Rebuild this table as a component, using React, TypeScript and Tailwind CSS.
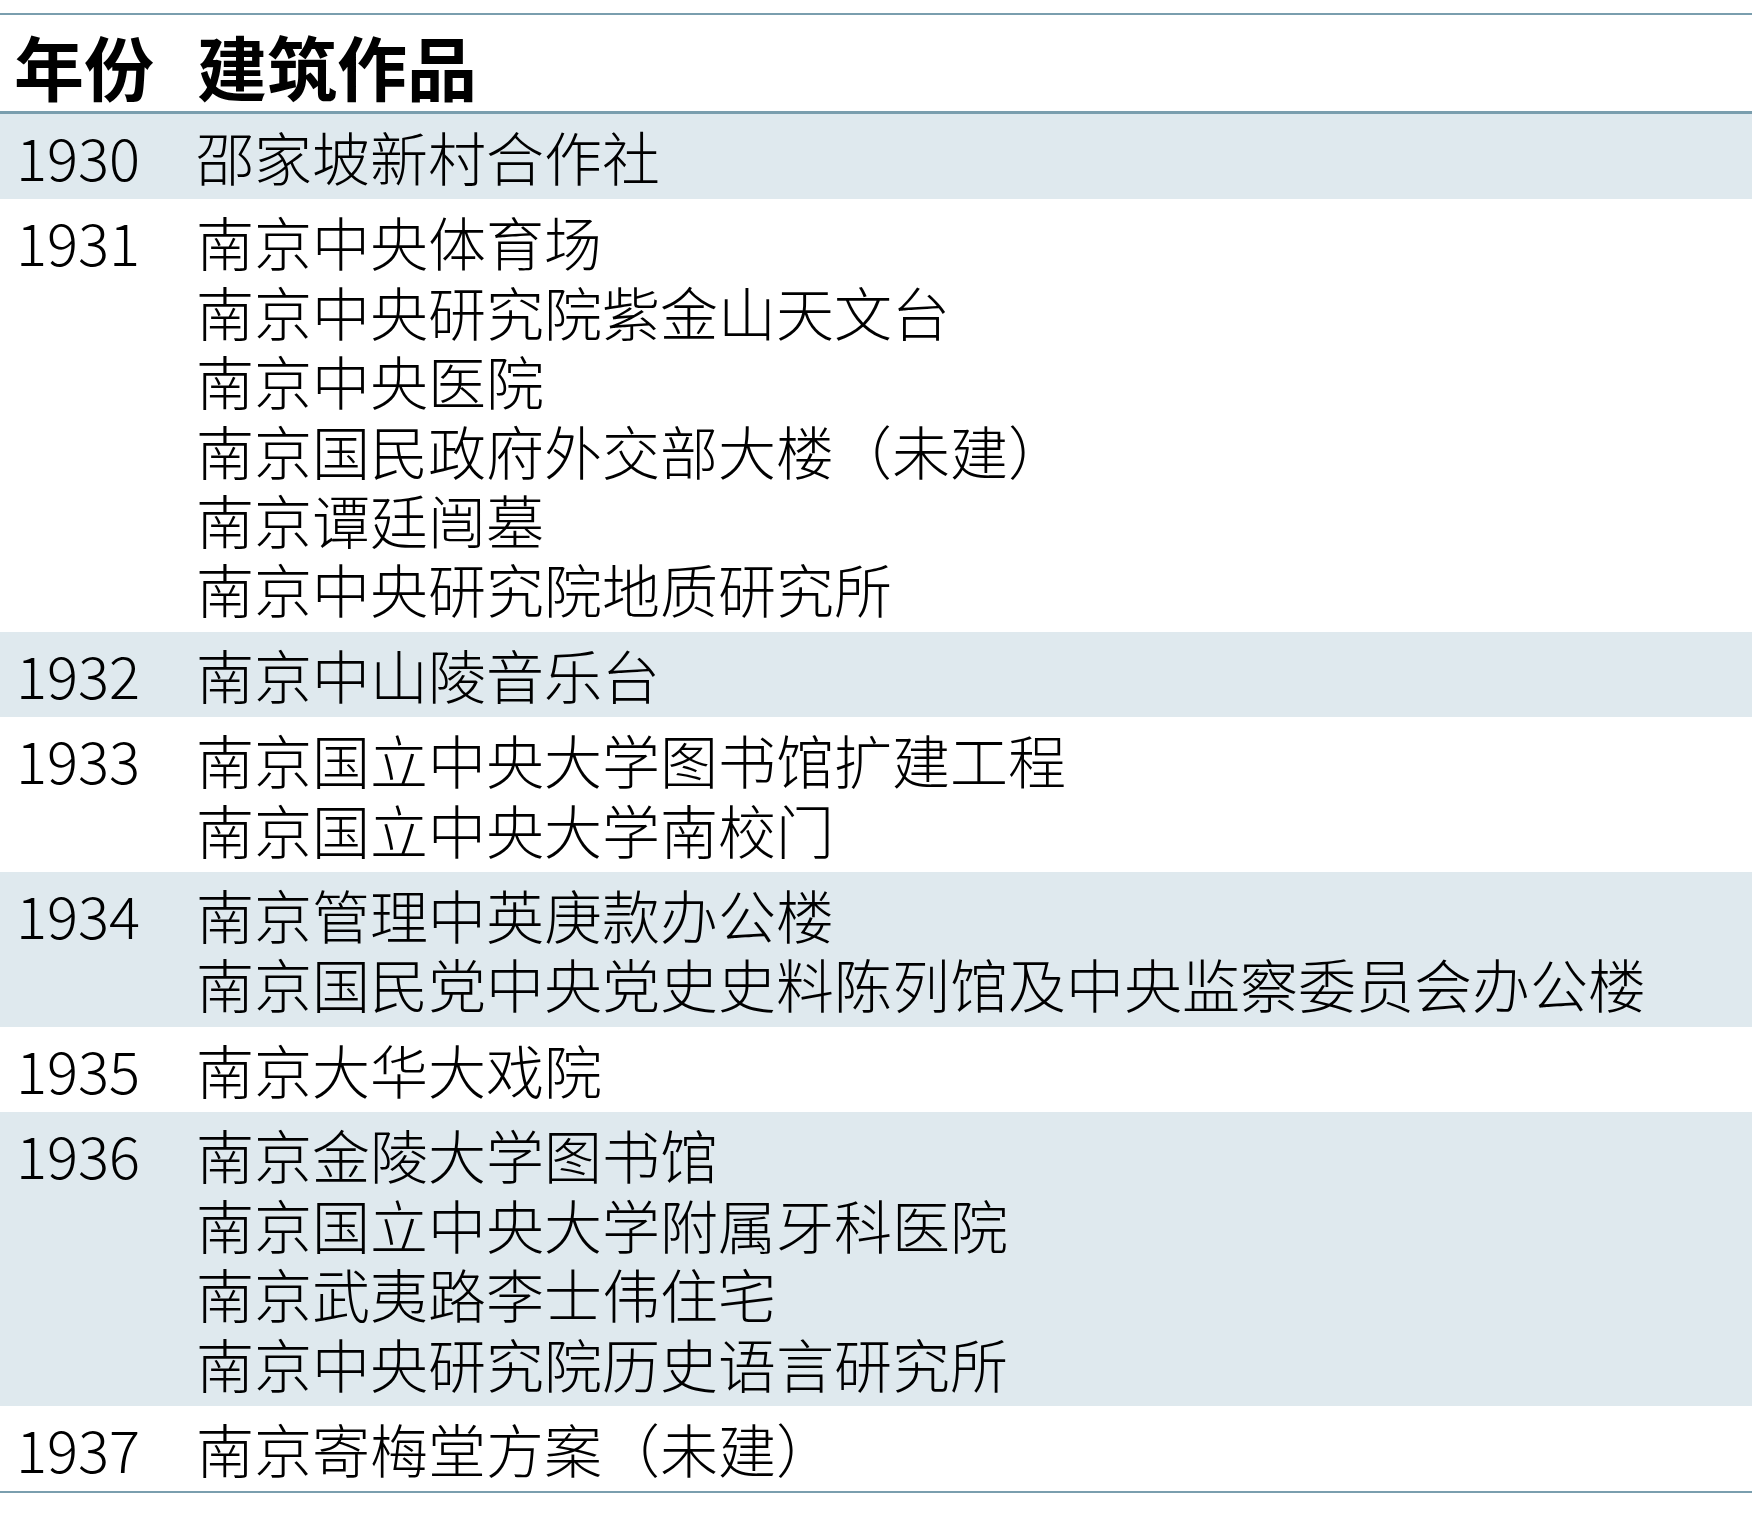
const rows: { year: string; works: string[] }[] = [
  { year: "1930", works: ["邵家坡新村合作社"] },
  {
    year: "1931",
    works: [
      "南京中央体育场",
      "南京中央研究院紫金山天文台",
      "南京中央医院",
      "南京国民政府外交部大楼（未建）",
      "南京谭廷闿墓",
      "南京中央研究院地质研究所",
    ],
  },
  { year: "1932", works: ["南京中山陵音乐台"] },
  { year: "1933", works: ["南京国立中央大学图书馆扩建工程", "南京国立中央大学南校门"] },
  { year: "1934", works: ["南京管理中英庚款办公楼", "南京国民党中央党史史料陈列馆及中央监察委员会办公楼"] },
  { year: "1935", works: ["南京大华大戏院"] },
  {
    year: "1936",
    works: ["南京金陵大学图书馆", "南京国立中央大学附属牙科医院", "南京武夷路李士伟住宅", "南京中央研究院历史语言研究所"],
  },
  { year: "1937", works: ["南京寄梅堂方案（未建）"] },
];

export default function App() {
  return (
    <div className="min-h-[1523px] bg-white pt-[13px] font-['Noto_Sans_CJK_SC',sans-serif] text-black">
      <div className="w-[1752px] border-y-2 border-[#7a9eae]">
        {/* header */}
        <div className="flex h-[99px] items-center border-b-[3px] border-[#7a9eae] pt-[6px] text-[70px] font-bold leading-none">
          <div className="w-[197px] pl-[14px]">年份</div>
          <div>建筑作品</div>
        </div>

        {rows.map((r, i) => (
          <div
            key={r.year}
            className={`flex py-[8px] text-[58px] font-light leading-[69.4px] ${i % 2 === 0 ? "bg-[#dfe9ee]" : ""}`}
          >
            <div className="w-[196px] shrink-0 pl-[16px]">{r.year}</div>
            <div className="flex flex-col whitespace-nowrap">
              {r.works.map((w) => (
                <div key={w}>{w}</div>
              ))}
            </div>
          </div>
        ))}
      </div>
    </div>
  );
}
